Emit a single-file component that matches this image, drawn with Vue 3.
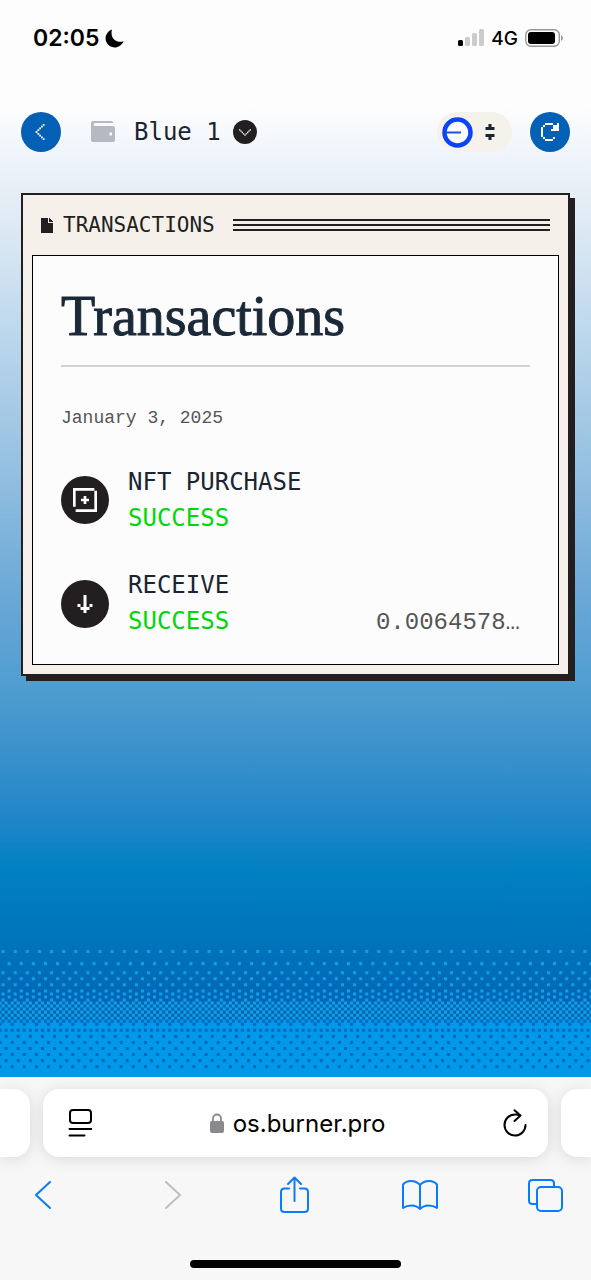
<script setup>
const rows = [
  { id: 1, title: 'NFT PURCHASE', status: 'SUCCESS', amount: '', icon: 'M0 0h8v1h-8zM0 1h1v6h-1zM8 1h1v8h-1zM1 8h7v1h-7zM4 3h1v1h1v1h-1v1h-1v-1h-1v-1h1z', box: '0 0 9 9', kind: 'nft' },
  { id: 2, title: 'RECEIVE', status: 'SUCCESS', amount: '0.0064578…', icon: 'M2 0h1v4h1v1h-1v1h-1v-1h-1v-1h1zM0 3h1v1h-1zM4 3h1v1h-1z', box: '0 0 5 6', kind: 'receive' },
]

// Dither band: each line is [row, first column, column step]
const lightDots = [
  [0, 1, 4], [4, 3, 4], [7, 1, 4], [9, 3, 4], [11, 1, 4], [13, 3, 4], [14, 1, 4],
  [15, 3, 4], [16, 1, 4], [17, 0, 2], [18, 1, 2], [19, 0, 2], [20, 1, 2], [21, 0, 2], [22, 1, 2],
]
const darkDots = [
  [23, 1, 2], [24, 0, 4], [26, 0, 2], [28, 2, 4], [30, 0, 4], [32, 2, 4], [34, 0, 4], [36, 2, 4], [38, 0, 4],
]
const dots = (list) => {
  let d = ''
  for (const [row, start, step] of list) {
    for (let x = start; x < 197; x += step) d += `M${x} ${row}h1v1h-1z`
  }
  return d
}
const lightPath = dots(lightDots)
const darkPath = dots(darkDots)
</script>

<template>
  <div class="screen">
    <div class="page">
      <div class="status">
        <div class="clock">
          <span>02:05</span>
          <svg class="moon" viewBox="0 0 19 19" aria-hidden="true"><path d="M7 .5A9.200 9.200 0 1 0 18.500 12.200C12 14.500 4.500 9.500 7 .5z" /></svg>
        </div>
        <div class="signals">
          <svg class="bars" viewBox="0 0 26 18" aria-hidden="true">
            <rect x="0" y="11" width="5" height="6" rx="1.500" fill="#000" />
            <rect x="7" y="8" width="5" height="9" rx="1.500" />
            <rect x="14" y="4" width="5" height="13" rx="1.500" />
            <rect x="21" y="0" width="5" height="17" rx="1.500" />
          </svg>
          <span class="network">4G</span>
          <svg class="battery" viewBox="0 0 38 18" aria-hidden="true">
            <rect x=".8" y=".8" width="33.500" height="16.400" rx="5" fill="none" stroke="#999" stroke-width="1.400" />
            <rect x="3" y="3" width="27" height="12" rx="3" />
            <path d="M36 6q2 1 2 3t-2 3z" fill="#999" />
          </svg>
        </div>
      </div>

      <header class="nav">
        <button class="round" type="button" aria-label="Back">
          <svg class="back" viewBox="0 0 6 9"><path d="M4 0h1v1h-1zM3 1h1v1h-1zM2 2h1v1h-1zM1 3h1v1h-1zM0 4h1v1h-1zM1 5h1v1h-1zM2 6h1v1h-1zM3 7h1v1h-1zM4 8h1v1h-1z" /></svg>
        </button>
        <button class="wallet" type="button">
          <svg class="purse" viewBox="0 0 24 22" aria-hidden="true">
            <path fill-rule="evenodd" d="M2 0H20Q22 0 22.500 2H4.500Q2.500 2 2.500 3.500T4.500 5H22Q24 5 24 7V19Q24 21 22 21H2Q0 21 0 19V2Q0 0 2 0zM18.500 11.500V14.500H21V11.500z" />
          </svg>
          <span class="name">Blue 1</span>
          <span class="drop">
            <svg viewBox="0 0 9 5" aria-hidden="true"><path d="M0 0h1v1h-1zM1 1h1v1h-1zM2 2h1v1h-1zM3 3h1v1h-1zM4 4h1v1h-1zM5 3h1v1h-1zM6 2h1v1h-1zM7 1h1v1h-1zM8 0h1v1h-1z" /></svg>
          </span>
        </button>
        <button class="chain" type="button" aria-label="Switch network">
          <svg class="coin" viewBox="0 0 31 31"><circle cx="15.500" cy="15.500" r="13" fill="#fcfcfc" stroke="#0a45f5" stroke-width="4.500" /><path d="M4 15.500h15" stroke="#1b55dd" stroke-width="2" /></svg>
          <svg class="updown" viewBox="0 0 9 16"><path d="M3 0h3v3h3v3h-9v-3h3zM0 10h9v3h-3v3h-3v-3h-3z" /></svg>
        </button>
        <button class="round" type="button" aria-label="Refresh">
          <svg class="reload" viewBox="0 0 9 9"><path d="M2 0h4v1h-4zM1 1h1v1h-1zM0 2h1v5h-1zM1 7h1v1h-1zM2 8h4v1h-4zM6 7h1v1h-1zM8 0h1v4h-4v-1h1v-1h1v-1h1zM6 1h1v1h-1z" /></svg>
        </button>
      </header>

      <main class="window">
        <div class="titlebar">
          <svg class="file" viewBox="0 0 12 15" aria-hidden="true"><path d="M0 0h7v5h5v10h-12zM8 0h1v1h1v1h1v1h1v1h-4z" /></svg>
          <span class="label">TRANSACTIONS</span>
          <span class="stripes"><i></i><i></i><i></i></span>
        </div>
        <section class="panel">
          <h1>Transactions</h1>
          <p class="date">January 3, 2025</p>
          <ul>
            <li v-for="row in rows" :key="row.id">
              <span class="badge"><svg :class="row.kind" :viewBox="row.box" aria-hidden="true"><path :d="row.icon" /></svg></span>
              <div class="lines">
                <div class="title">{{ row.title }}</div>
                <div class="result">
                  <span class="ok">{{ row.status }}</span>
                  <span v-if="row.amount" class="amount">{{ row.amount }}</span>
                </div>
              </div>
            </li>
          </ul>
        </section>
      </main>

      <svg class="dither" viewBox="0.500 0 195 42" aria-hidden="true">
        <rect x="0" y="23" width="197" height="19" fill="#0099ea" />
        <path :d="lightPath" fill="#129fe3" />
        <path :d="darkPath" fill="#0069bd" />
      </svg>
    </div>

    <footer class="browser">
      <div class="tabs">
        <div class="tab"></div>
        <div class="tab address">
          <button type="button" aria-label="Page settings">
            <svg class="reader" viewBox="0 0 24 28"><rect x="2" y="1" width="21" height="13" rx="3" /><path d="M1.500 20h22M1.500 26.500h15" /></svg>
          </button>
          <div class="url">
            <svg class="lock" viewBox="0 0 14 20" aria-hidden="true"><rect y="8" width="14" height="12" rx="2" fill="#8a8a8d" /><path d="M3 9V5.500a4 4 0 0 1 8 0V9" fill="none" stroke="#8a8a8d" stroke-width="1.800" /></svg>
            <span>os.burner.pro</span>
          </div>
          <button type="button" aria-label="Reload">
            <svg class="again" viewBox="0 0 24 28"><path d="M22.500 16A10.500 10.500 0 1 1 12 5.500Q15 5.500 17 6.500M11.500 1.200L17.500 6.500L11.500 12" /></svg>
          </button>
        </div>
        <div class="tab"></div>
      </div>
      <nav class="tools">
        <button type="button" aria-label="Previous page"><svg viewBox="0 0 36 40"><path d="M25 7L11 20L25 33" /></svg></button>
        <button type="button" class="off" aria-label="Next page"><svg viewBox="0 0 36 40"><path d="M15 7L29 20L15 33" /></svg></button>
        <button type="button" aria-label="Share"><svg viewBox="0 0 36 40"><path d="M13 13.500H8.500Q5 13.500 5 17V33.500Q5 37 8.500 37H28.500Q32 37 32 33.500V17Q32 13.500 28.500 13.500H24M18.500 26V3M12 9L18.500 2.500L25 9" /></svg></button>
        <button type="button" aria-label="Bookmarks"><svg viewBox="0 0 36 40"><path d="M18 10Q14.500 6 9 6Q4 6 1 9.500V33Q4.500 30.500 9.500 30.500T18 34Q21.500 30.500 26.500 30.500T35 33V9.500Q32 6 27 6Q21.500 6 18 10zM18 10V34" /></svg></button>
        <button type="button" aria-label="Tabs"><svg viewBox="0 0 36 40"><rect x="10" y="12" width="25" height="24" rx="4" /><path d="M10 29H5.500Q2 29 2 25.500V8.500Q2 5 5.500 5H23.500Q27 5 27 8.500V12" /></svg></button>
      </nav>
      <div class="home"></div>
    </footer>
  </div>
</template>

<style>
body {
  margin: 0;
}
</style>

<style scoped>
.screen {
  display: flex;
  flex-direction: column;
  min-height: 100vh;
  font-family: Inter, "Liberation Sans", sans-serif;
  color: #000;
}
button {
  display: flex;
  align-items: center;
  justify-content: center;
  padding: 0;
  border: 0;
  background: none;
  color: inherit;
  font: inherit;
}
svg {
  display: block;
  flex: none;
}
.page {
  flex: 1;
  display: flex;
  flex-direction: column;
  background: linear-gradient(#fdfdfd 0, #fdfdfd 10%, #f0f5fb 14%, #e6eef6 18%, #dae8f4 22%, #b9d5eb 32%, #9ac3e2 42%, #65a5d5 57%, #529fd1 63%, #368fca 71%, #1f86c8 76%, #0080c2 81%, #0075bc 87%, #0067b6 93%);
}
.status {
  display: flex;
  justify-content: space-between;
  align-items: center;
  height: 76px;
  padding: 0 28px 0 33px;
}
.clock,
.signals {
  display: flex;
  align-items: center;
}
.clock {
  gap: 6px;
  font-size: 23px;
  font-weight: 600;
}
.moon {
  width: 19px;
  height: 19px;
}
.bars {
  width: 26px;
  height: 18px;
  fill: #ccc;
}
.network {
  margin: 0 7px;
  font-size: 19px;
  font-weight: 500;
}
.battery {
  width: 38px;
  height: 18px;
}
.nav {
  display: flex;
  align-items: center;
  padding: 36px 21px 0;
}
.round {
  width: 40px;
  height: 40px;
  border-radius: 50%;
  background: #0460b4;
  fill: #fff;
}
.back {
  width: 12px;
  height: 16px;
}
.reload {
  width: 18px;
  height: 18px;
}
.wallet {
  margin: 0 auto 0 30px;
}
.purse {
  width: 24px;
  height: 22px;
  fill: #b5b9c2;
}
.name {
  margin: 0 12px 0 19px;
  font: 24px/32px "DejaVu Sans Mono", monospace;
  color: #1a2433;
}
.drop {
  display: grid;
  place-items: center;
  width: 24px;
  height: 24px;
  border-radius: 50%;
  background: #231f20;
  fill: #fff;
}
.drop svg {
  width: 12px;
  height: 7px;
}
.chain {
  gap: 12px;
  height: 40px;
  margin-right: 18px;
  padding: 0 17px 0 5px;
  border-radius: 20px;
  background: #f5f2ec;
}
.coin {
  width: 31px;
  height: 31px;
}
.updown {
  width: 10px;
  height: 16px;
  fill: #1a2433;
}
.window {
  margin: 41px 21px 0;
  padding: 0 9px 9px;
  border: 2px solid #231f20;
  background: #f5f1ea;
  box-shadow: 5px 5px 0 #231f20;
}
.titlebar {
  display: flex;
  align-items: center;
  height: 60px;
  padding: 0 9px;
}
.file {
  width: 12px;
  height: 15px;
  fill: #231f20;
}
.label {
  margin: 0 18px 0 10px;
  font: 21px/28px "DejaVu Sans Mono", monospace;
  color: #231f20;
}
.stripes {
  flex: 1;
  display: grid;
  gap: 3px;
}
.stripes i {
  height: 2px;
  background: #231f20;
}
.panel {
  padding: 28px 28px 23px;
  border: 1px solid #000;
  background: #fcfcfd;
}
h1 {
  margin: 0;
  padding-bottom: 17px;
  border-bottom: 2px solid #d2d2d4;
  font: 56px/64px "Liberation Serif", serif;
  color: #1a2838;
  -webkit-text-stroke: 1px #1a2838;
}
.date {
  margin: 39px 0 34px;
  font: 18px/24px "Liberation Mono", monospace;
  color: #555;
}
ul {
  display: grid;
  gap: 31px;
  margin: 0;
  padding: 0;
  list-style: none;
}
li {
  display: flex;
  align-items: center;
  gap: 19px;
}
.badge {
  display: grid;
  place-items: center;
  width: 48px;
  height: 48px;
  border-radius: 50%;
  background: #231f20;
  fill: #fff;
}
.nft {
  width: 24px;
  height: 24px;
}
.receive {
  width: 16px;
  height: 18px;
}
.lines {
  flex: 1;
  padding-right: 10px;
  font: 24px/36px "DejaVu Sans Mono", monospace;
}
.title {
  color: #1a2433;
}
.result {
  display: flex;
  align-items: baseline;
  justify-content: space-between;
}
.ok {
  color: #00d70b;
}
.amount {
  font-family: "Liberation Mono", monospace;
  color: #555;
}
.dither {
  width: 100%;
  margin-top: auto;
}
.browser {
  padding: 12px 0;
  background: #f7f7f7;
}
.tabs {
  display: grid;
  grid-template-columns: 30px 1fr 30px;
  gap: 13px;
}
.tab {
  height: 68px;
  border-radius: 16px;
  background: #fff;
  box-shadow: 0 2px 16px rgba(0, 0, 0, 0.12);
}
.tab:first-child {
  border-radius: 0 16px 16px 0;
}
.tab:last-child {
  border-radius: 16px 0 0 16px;
}
.address {
  display: flex;
  align-items: center;
  justify-content: space-between;
  padding: 0 21px 0 25px;
}
.reader,
.again {
  width: 24px;
  height: 28px;
  fill: none;
  stroke: #000;
  stroke-width: 2;
  stroke-linecap: round;
  stroke-linejoin: round;
}
.url {
  display: flex;
  align-items: center;
  gap: 9px;
  font-size: 24px;
}
.lock {
  width: 14px;
  height: 20px;
}
.tools {
  display: flex;
  justify-content: space-between;
  padding: 18px 28px 0 25px;
}
.tools svg {
  width: 36px;
  height: 40px;
  fill: none;
  stroke: #0a7aff;
  stroke-width: 2;
  stroke-linecap: round;
  stroke-linejoin: round;
}
.tools .off svg {
  stroke: #bfbfc1;
}
.home {
  width: 211px;
  height: 8px;
  margin: 45px auto 0;
  border-radius: 4px;
  background: #000;
}
</style>
